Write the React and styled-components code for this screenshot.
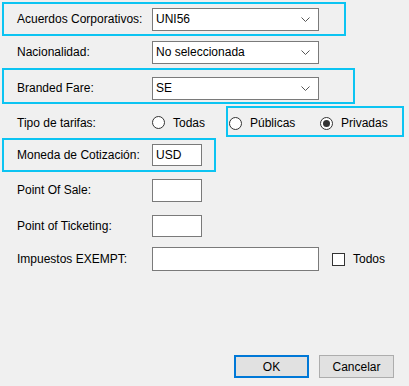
import React from 'react';
import styled, { createGlobalStyle } from 'styled-components';

const GlobalStyle = createGlobalStyle`
  body {
    margin: 0;
    background: #f0f0f0;
    font-family: "Liberation Sans", Arial, sans-serif;
  }
`;

const CYAN = '#0cc4f2';

const Dialog = styled.div`
  width: 409px;
  height: 386px;
  background: #f0f0f0;
  display: flex;
  flex-direction: column;
  box-sizing: border-box;
  padding-top: 2px;
  padding-bottom: 8px;
  font-size: 12px;
  color: #000;
`;

const Row = styled.div`
  box-sizing: border-box;
  margin-left: 2px;
  width: ${(p) => (p.$w ? `${p.$w}px` : 'auto')};
  height: ${(p) => p.$h}px;
  padding-top: ${(p) => p.$pt || 0}px;
  border: 2px solid ${(p) => (p.$hl ? CYAN : 'transparent')};
  display: flex;
  align-items: center;
`;

const Label = styled.div`
  box-sizing: border-box;
  flex-shrink: 0;
  width: 148px;
  padding-left: 13px;
  white-space: nowrap;
`;

const Combo = styled.div`
  box-sizing: border-box;
  flex-shrink: 0;
  width: 167px;
  height: 23px;
  background: #fff;
  border: 1px solid #7a7a7a;
  display: flex;
  align-items: center;
  justify-content: space-between;
  padding: 0 8px 0 3px;
`;

const TextBox = styled.div`
  box-sizing: border-box;
  flex-shrink: 0;
  width: ${(p) => p.$w}px;
  height: ${(p) => p.$h || 23}px;
  background: #fff;
  border: 1px solid #7a7a7a;
  display: flex;
  align-items: center;
  padding-left: 3px;
`;

const Option = styled.div`
  display: flex;
  flex-shrink: 0;
  align-items: center;
  gap: 8px;
  width: ${(p) => (p.$w ? `${p.$w}px` : 'auto')};
`;

const Radio = styled.span`
  box-sizing: border-box;
  width: 13px;
  height: 13px;
  border-radius: 50%;
  border: 1px solid #333;
  background: #fff;
  display: flex;
  align-items: center;
  justify-content: center;

  &::after {
    content: '';
    width: 7px;
    height: 7px;
    border-radius: 50%;
    background: ${(p) => (p.$checked ? '#333' : 'transparent')};
  }
`;

const RadioFrame = styled.div`
  box-sizing: border-box;
  flex-shrink: 0;
  align-self: flex-start;
  margin-top: -3px;
  width: 178px;
  height: 31px;
  border: 2px solid ${CYAN};
  display: flex;
  align-items: center;
  padding: 3px 0 0 1px;
`;

const CheckBox = styled.span`
  box-sizing: border-box;
  width: 13px;
  height: 13px;
  border: 1px solid #333;
  background: #fff;
  margin-left: 13px;
  margin-right: 8px;
`;

const ButtonBar = styled.div`
  margin-top: auto;
  display: flex;
  justify-content: flex-end;
  gap: 10px;
  padding-right: 15px;
`;

const Button = styled.button`
  box-sizing: border-box;
  width: 75px;
  height: 23px;
  background: #e1e1e1;
  border: ${(p) => (p.$default ? '2px solid #0078d7' : '1px solid #adadad')};
  font-family: inherit;
  font-size: 12px;
  color: #000;
  padding: 0;
`;

const Chevron = () => (
  <svg width="9" height="5" viewBox="0 0 9 5">
    <path d="M0.5 0.5 L4.5 4.5 L8.5 0.5" fill="none" stroke="#555" strokeWidth="1" />
  </svg>
);

export default function App() {
  return (
    <Dialog>
      <GlobalStyle />
      <Row $hl $w={344} $h={34}>
        <Label>Acuerdos Corporativos:</Label>
        <Combo>
          <span>UNI56</span>
          <Chevron />
        </Combo>
      </Row>
      <Row $h={32}>
        <Label>Nacionalidad:</Label>
        <Combo>
          <span>No seleccionada</span>
          <Chevron />
        </Combo>
      </Row>
      <Row $hl $w={353} $h={36} $pt={4}>
        <Label>Branded Fare:</Label>
        <Combo>
          <span>SE</span>
          <Chevron />
        </Combo>
      </Row>
      <Row $h={34} $pt={3}>
        <Label>Tipo de tarifas:</Label>
        <Option $w={74}>
          <Radio />
          <span>Todas</span>
        </Option>
        <RadioFrame>
          <Option $w={91}>
            <Radio />
            <span>Públicas</span>
          </Option>
          <Option>
            <Radio $checked />
            <span>Privadas</span>
          </Option>
        </RadioFrame>
      </Row>
      <Row $hl $w={214} $h={34}>
        <Label>Moneda de Cotización:</Label>
        <TextBox $w={50} $h={22}>USD</TextBox>
      </Row>
      <Row $h={36}>
        <Label>Point Of Sale:</Label>
        <TextBox $w={50} />
      </Row>
      <Row $h={35}>
        <Label>Point of Ticketing:</Label>
        <TextBox $w={50} $h={22} />
      </Row>
      <Row $h={32}>
        <Label>Impuestos EXEMPT:</Label>
        <TextBox $w={167} $h={24} />
        <CheckBox />
        <span>Todos</span>
      </Row>
      <ButtonBar>
        <Button $default>OK</Button>
        <Button>Cancelar</Button>
      </ButtonBar>
    </Dialog>
  );
}
